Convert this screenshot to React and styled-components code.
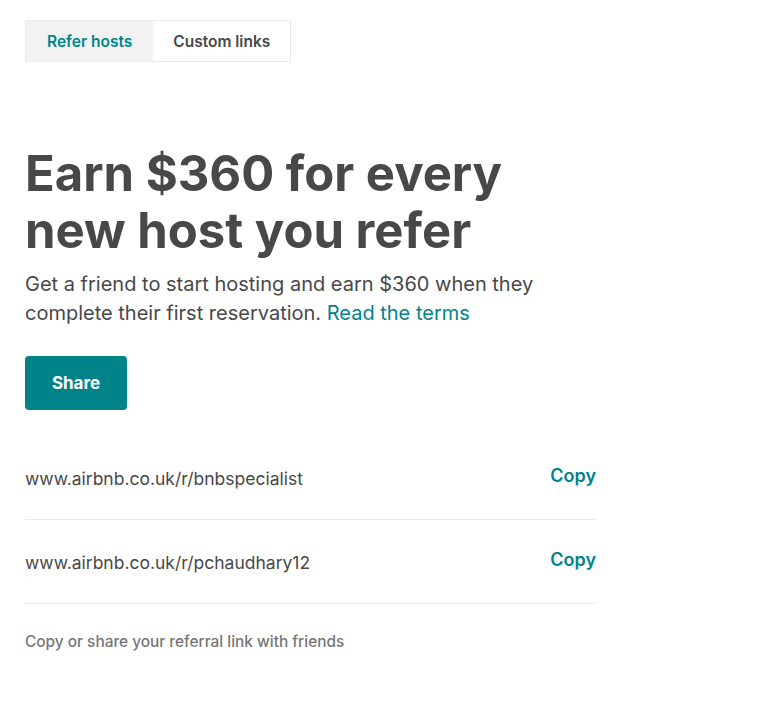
import styled, { createGlobalStyle } from "styled-components";

const teal = "#008489";
const ink = "#484848";

const GlobalStyle = createGlobalStyle`
  body {
    margin: 0;
    background: #fff;
    font-family: Inter, "Open Sans", sans-serif;
    color: ${ink};
  }
`;

const Page = styled.div`
  padding: 20px 25px 40px;
  width: 571px;
`;

const Tabs = styled.div`
  display: inline-flex;
  border: 1px solid #ebebeb;
`;

const Tab = styled.button`
  font-family: inherit;
  font-size: 15.5px;
  font-weight: 600;
  height: 40px;
  padding: 0 ${(props) => (props.active ? "21px" : "20px")};
  border: 0;
  background: ${(props) => (props.active ? "#f2f2f2" : "#fff")};
  color: ${(props) => (props.active ? teal : ink)};
  cursor: pointer;
`;

const Heading = styled.h1`
  margin: 83px 0 0;
  font-size: 49px;
  line-height: 57px;
  font-weight: 700;
`;

const Lead = styled.p`
  margin: 11px 0 0;
  font-size: 20px;
  line-height: 29px;
  font-weight: 400;
`;

const TermsLink = styled.a`
  color: ${teal};
  text-decoration: none;
  cursor: pointer;
`;

const ShareButton = styled.button`
  margin-top: 28px;
  width: 102px;
  height: 54px;
  border: 0;
  border-radius: 4px;
  background: ${teal};
  color: #fff;
  font-family: inherit;
  font-size: 17px;
  font-weight: 700;
  cursor: pointer;
`;

const LinkList = styled.div`
  margin-top: 26px;
`;

const LinkRow = styled.div`
  display: flex;
  justify-content: space-between;
  align-items: center;
  height: 83px;
  border-bottom: 1px solid #ebebeb;
`;

const Url = styled.span`
  font-size: 17.5px;
  margin-top: 2px;
`;

const CopyButton = styled.button`
  border: 0;
  padding: 0;
  background: none;
  font-family: inherit;
  font-size: 18px;
  font-weight: 600;
  color: ${teal};
  margin-top: -4px;
  cursor: pointer;
`;

const Note = styled.p`
  margin: 28px 0 0;
  font-size: 15.4px;
  font-weight: 500;
  color: #767676;
`;

const links = [
  "www.airbnb.co.uk/r/bnbspecialist",
  "www.airbnb.co.uk/r/pchaudhary12",
];

export default function App() {
  return (
    <>
      <GlobalStyle />
      <Page>
        <Tabs>
          <Tab active>Refer hosts</Tab>
          <Tab>Custom links</Tab>
        </Tabs>
        <Heading>
          Earn $360 for every
          <br />
          new host you refer
        </Heading>
        <Lead>
          Get a friend to start hosting and earn $360 when they complete their
          first reservation. <TermsLink>Read the terms</TermsLink>
        </Lead>
        <ShareButton>Share</ShareButton>
        <LinkList>
          {links.map((url) => (
            <LinkRow key={url}>
              <Url>{url}</Url>
              <CopyButton>Copy</CopyButton>
            </LinkRow>
          ))}
        </LinkList>
        <Note>Copy or share your referral link with friends</Note>
      </Page>
    </>
  );
}
